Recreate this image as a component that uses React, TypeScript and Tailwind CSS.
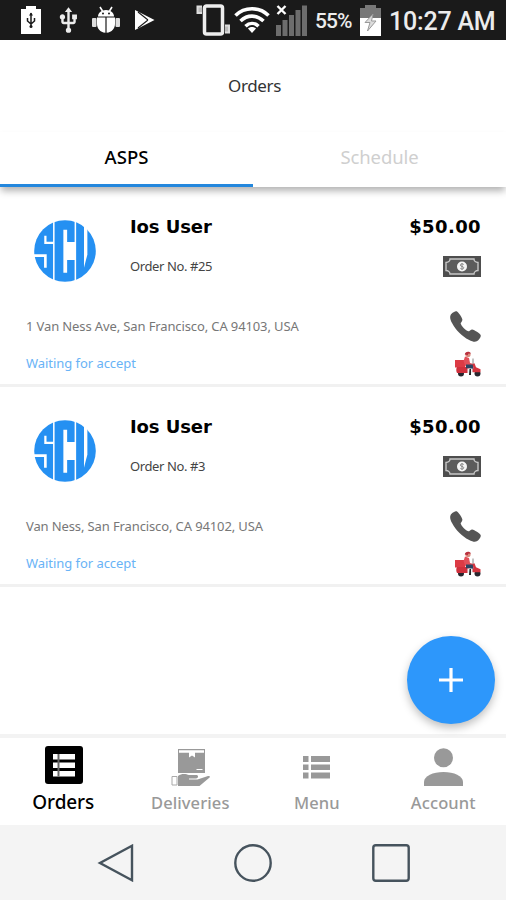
import React from 'react';
import { IoCall } from 'react-icons/io5';
import { MdUsb } from 'react-icons/md';

interface Order {
  id: number;
  customer: string;
  total: string;
  address: string;
  status: string;
}

const orders: Order[] = [
  { id: 25, customer: 'Ios User', total: '$50.00', address: '1 Van Ness Ave, San Francisco, CA 94103, USA', status: 'Waiting for accept' },
  { id: 3, customer: 'Ios User', total: '$50.00', address: 'Van Ness, San Francisco, CA 94102, USA', status: 'Waiting for accept' },
];

function StatusBar() {
  return (
    <div className="flex h-10 shrink-0 items-center bg-[#1a1a1a] pl-[21px] font-['Roboto',sans-serif] font-medium text-[#ececec]">
      <svg width="20" height="28" viewBox="0 0 20 28" fill="#fff">
        <path d="M5 0h10v3h5v25H0V3h5z" />
        <path d="M10 7v14M6.500 12v3l3.500 3 3.500-3v-3" stroke="#1a1a1a" strokeWidth="1.5" fill="none" />
        <path d="M8 9.500 10 6.500l2 3z" fill="#1a1a1a" />
        <circle cx="10" cy="20.500" r="1.500" fill="#1a1a1a" />
      </svg>
      <MdUsb className="ml-[13px] size-[29px]" />
      <svg className="ml-[9px]" width="28" height="28" viewBox="0 0 28 28" fill="#fff">
        <path d="M6 10.500c0-3.500 3-6.500 8-6.500s8 3 8 6.500z" />
        <path d="m8 1 2.500 4M20 1l-2.500 4" stroke="#fff" strokeWidth="1.600" />
        <path d="M5 11.500h8.400v15.300C8 26.500 5 22 5 18zM14.600 11.500H23V18c0 4-3 8.500-8.400 8.800z" />
        <rect x="0" y="12" width="4.500" height="9" rx="1" fill="#ddd" />
        <rect x="23.500" y="12" width="4.500" height="9" rx="1" fill="#ddd" />
        <circle cx="11" cy="7.500" r="1" fill="#1a1a1a" />
        <circle cx="17" cy="7.500" r="1" fill="#1a1a1a" />
      </svg>
      <svg className="ml-[14px]" width="22" height="22" viewBox="0 0 22 22">
        <path d="M1 1v20L20.500 11z" fill="#fff" />
        <path d="m4 3 10 8M4 19l10-8" stroke="#1a1a1a" strokeWidth="1.100" />
      </svg>
      <svg className="ml-[40px]" width="35" height="32" viewBox="0 0 35 32">
        <rect x="8.500" y="2" width="18" height="28" rx="2" fill="none" stroke="#eee" strokeWidth="3.500" />
        <path d="M6 2.500H1.500V9H6M29 21.500h4v7h-4" fill="#bbb" stroke="#ddd" strokeWidth="2" />
      </svg>
      <svg className="ml-[3px]" width="36" height="28" viewBox="0 0 36 28" fill="none" stroke="#fff" strokeWidth="3.600">
        <path d="M1.500 9.500c9-9 24-9 33 0" />
        <path d="M6.500 15c7-6.500 16-6.500 23 0" />
        <path d="M11.500 20.300c4-3.800 9-3.800 13 0" />
        <path d="m14 22.500 4 4.500 4-4.500c-2-2-6-2-8 0z" fill="#fff" stroke="none" />
      </svg>
      <svg className="ml-[6px]" width="31" height="32" viewBox="0 0 31 32">
        <path d="M0 21h5v11H0zM6.500 16h5v16h-5zM13 11h5v21h-5zM19.500 6h5v26h-5zM26 1.500h5V32h-5z" fill="#6d6d6d" />
        <path d="m1.500 2 8 8M9.500 2l-8 8" stroke="#fff" strokeWidth="2.400" />
      </svg>
      <span className="mt-[3px] ml-[8px] w-[38px] text-[21px] tracking-[-0.9px] whitespace-nowrap">55%</span>
      <svg className="ml-[7px]" width="21" height="31" viewBox="0 0 21 31">
        <path d="M5 0h11v3h5v28H0V3h5z" fill="#777" />
        <path d="M0 13h21v18H0z" fill="#fff" />
        <path d="M13 9 5 17.500h5L7.500 26l8.500-10h-4.500z" fill="#ddd" stroke="#999" strokeWidth="1" />
      </svg>
      <span className="mt-[3px] ml-[8px] text-[25px] tracking-[-0.2px] whitespace-nowrap">10:27 AM</span>
    </div>
  );
}

function StoreLogo() {
  return (
    <svg width="62" height="62" viewBox="0 0 61 61">
      <circle cx="30.500" cy="30.500" r="30.300" fill="#2590f2" />
      <g fill="none" stroke="#fff">
        <path d="M19.500 0v61M40.700 0v61" strokeWidth="1.500" />
        <path d="M19.500 22.500h-8.300V15.500" strokeWidth="2.200" />
        <path d="M0 35h11.200V47" strokeWidth="2.600" />
      </g>
      <path d="M28.900 9.500h3.700v12.200h7.900v17.600h-7.900V52h-3.700z" fill="#fff" />
      <path d="M49.200 0h3.300v34l-3.300 13z" fill="#fff" />
    </svg>
  );
}

function CashIcon() {
  return (
    <svg width="38" height="21" viewBox="0 0 38 21">
      <rect width="38" height="21" fill="#4e4e4e" />
      <path d="M7 3h24c0 2 2 3.500 4 3.500v8c-2 0-4 1.500-4 3.500H7c0-2-2-3.500-4-3.500v-8c2 0 4-1.500 4-3.500z" fill="#5c5c5c" stroke="#c8c8c8" strokeWidth="1.400" />
      <circle cx="19" cy="10.500" r="5" fill="#f4f4f4" />
      <path d="M20.800 8.500c-1-1-3.500-.8-3.500.6 0 1.700 3.500 1 3.500 2.700 0 1.400-2.500 1.600-3.500.5M19 7v7" fill="none" stroke="#777" strokeWidth=".8" />
    </svg>
  );
}

function ScooterIcon() {
  return (
    <svg width="27" height="26" viewBox="0 0 27 26">
      <circle cx="7" cy="22.500" r="3" fill="#26262e" />
      <circle cx="23.500" cy="22.500" r="3" fill="#26262e" />
      <path d="M1 9h10v7.500H1z" fill="#dc3b45" />
      <path d="M3 16h10l3 1.500V22H3c-1-2-1-4.500 0-6z" fill="#cf303c" />
      <path d="M11 5.500 15 7l1 5 3.500 1-1 2.500h-7L9.500 10z" fill="#e2505a" />
      <path d="M12 13.500h7l1 7.500h-3l-1.500-4-3.500.5z" fill="#2c4563" />
      <path d="M19 7.500V13" stroke="#888" />
      <path d="m18.500 13 2-.7 1.500 4 4.500 2v3h-8L17 18.500l2.500-1z" fill="#d5343f" />
      <circle cx="14" cy="3.500" r="2.600" fill="#d88b7d" />
      <path d="M10.800 3.500C11 0 16 0 17 2.500l-3 .3v1.500z" fill="#b9303e" />
      <path d="M13.500 17.500h5V22h-5z" fill="#eef2f5" />
      <path d="M15.500 18H17v6h-2z" fill="#222" />
    </svg>
  );
}

function OrderCard({ order }: { order: Order }) {
  return (
    <div className="flex h-[200px] flex-col border-b-3 border-[#f1f1f1] pr-[25px] pl-[26px]">
      <div className="flex h-[114px] pt-[33px]">
        <div className="ml-[8px] w-[96px]">
          <StoreLogo />
        </div>
        <div className="flex flex-1 flex-col">
          <h2 className="-mt-[5px] font-['DejaVu_Sans',sans-serif] text-[18px] leading-6 font-bold tracking-[-0.1px] whitespace-nowrap text-black">{order.customer}</h2>
          <p className="mt-[17px] text-[13px] leading-5 tracking-[-0.4px] whitespace-nowrap text-[#444]">Order No. #{order.id}</p>
        </div>
        <div className="flex flex-col items-end">
          <div className="-mt-[5px] font-['DejaVu_Sans',sans-serif] text-[18px] leading-6 font-bold tracking-[0.4px] text-black">{order.total}</div>
          <div className="mt-[17px]">
            <CashIcon />
          </div>
        </div>
      </div>
      <div className="flex h-[50px] items-center justify-between">
        <p className="mt-[2px] text-[13px] tracking-[-0.12px] whitespace-nowrap text-[#777]">{order.address}</p>
        <IoCall className="-mr-[2px] size-[35px] text-[#555]" />
      </div>
      <div className="flex h-[26px] items-center justify-between">
        <p className="text-[13px] tracking-[-0.05px] whitespace-nowrap text-[#69b3f6]">{order.status}</p>
        <ScooterIcon />
      </div>
    </div>
  );
}

function OrdersIcon() {
  return (
    <svg width="38" height="38" viewBox="0 0 38 38">
      <rect width="38" height="38" rx="3" fill="#000" />
      <path d="M8 8h22v5.500H8zM8 16.500h22V22H8zM8 25h22v5.500H8z" fill="#fff" />
      <path d="M13.500 8v22.500" stroke="#666" strokeWidth="2" />
    </svg>
  );
}

function DeliveriesIcon() {
  return (
    <svg width="39" height="38" viewBox="0 0 39 38" fill="#999">
      <path d="M7 1h27v24H7z" />
      <path d="M8 2.300h25v2.400H8zM18 4h6v5.500l-3-2-3 2zM25.500 21h6v1h-6z" fill="#fff" />
      <path d="M1 28.500h5v8.500H1z" fill="#fff" stroke="#aaa" />
      <path d="M7 28c4-3 8-2 11-1h8c2 1 1 3-1 3.500h-7v1h8.500L37 28c2-.5 2.500 1 1 2l-9.500 8H7z" />
    </svg>
  );
}

function MenuIcon() {
  return (
    <svg width="27" height="38" viewBox="0 0 27 38" fill="#999">
      <path d="M0 8h5.500v6H0zM8 8h19v6H8zM0 16.500h5.500V22H0zM8 16.500h19V22H8zM0 24.500h5.500v6H0zM8 24.500h19v6H8z" />
    </svg>
  );
}

function AccountIcon() {
  return (
    <svg width="39" height="38" viewBox="0 0 39 38" fill="#999">
      <circle cx="19.500" cy="9.800" r="9.500" />
      <path d="M0 38v-4c0-6 9-10 19.500-10S39 28 39 34v4z" />
    </svg>
  );
}

const tabs = [
  { label: 'Orders', icon: <OrdersIcon />, active: true },
  { label: 'Deliveries', icon: <DeliveriesIcon />, active: false },
  { label: 'Menu', icon: <MenuIcon />, active: false },
  { label: 'Account', icon: <AccountIcon />, active: false },
];

function BottomTabs() {
  return (
    <nav className="grid h-[91px] shrink-0 grid-cols-4 border-t-4 border-[#f3f3f3] bg-white">
      {tabs.map((tab) => (
        <div key={tab.label} className="flex flex-col items-center">
          {tab.active ? (
            <>
              <div className="mt-[8px] ml-px">{tab.icon}</div>
              <span className="mt-[6px] text-[19px] leading-6 font-medium tracking-[-0.1px] text-black">{tab.label}</span>
            </>
          ) : (
            <>
              <div className="mt-[10px] ml-px">{tab.icon}</div>
              <span className="mt-[5px] ml-px text-[16.5px] leading-6 font-medium tracking-[0.1px] text-[#999]">{tab.label}</span>
            </>
          )}
        </div>
      ))}
    </nav>
  );
}

function SystemNav() {
  return (
    <div className="flex h-[75px] shrink-0 items-center justify-center gap-[100px] bg-[#f4f4f4]">
      <svg width="38" height="38" viewBox="0 0 38 38" fill="none" stroke="#46535d" strokeWidth="2.400">
        <path d="M36 1.800v34.400L4 19z" />
      </svg>
      <svg width="38" height="38" viewBox="0 0 38 38" fill="none" stroke="#46535d" strokeWidth="2.400">
        <circle cx="19" cy="19" r="17.700" />
      </svg>
      <svg width="38" height="38" viewBox="0 0 38 38" fill="none" stroke="#46535d" strokeWidth="2.400">
        <rect x="1.300" y="1.300" width="35.400" height="35.400" rx="2.500" />
      </svg>
    </div>
  );
}

export default function App() {
  return (
    <div className="relative flex h-[900px] w-[506px] flex-col overflow-hidden bg-white font-['Noto_Sans',sans-serif]">
      <StatusBar />
      <header className="flex h-[92px] shrink-0 items-center justify-center pl-[3px] text-[17px] tracking-[-0.4px] text-[#333]">Orders</header>
      <div className="relative z-10 flex h-[55px] shrink-0 bg-white shadow-[0_5px_7px_-1px_rgba(0,0,0,0.3)]">
        <div className="flex flex-1 items-center justify-center border-b-3 border-[#2387dd] pb-[2px] text-[18.5px] font-medium text-black">ASPS</div>
        <div className="flex flex-1 items-center justify-center border-b-3 border-transparent pb-[2px] text-[18.5px] tracking-[-0.1px] text-[#cfcfcf]">Schedule</div>
      </div>
      <main className="min-h-0 flex-1 overflow-hidden">
        {orders.map((order) => (
          <OrderCard key={order.id} order={order} />
        ))}
      </main>
      <BottomTabs />
      <SystemNav />
      <button aria-label="Add order" className="absolute top-[636px] left-[407px] flex size-[88px] items-center justify-center rounded-full bg-[#2d97fb] shadow-[0_4px_8px_rgba(0,0,0,0.25)]">
        <svg width="24" height="24" viewBox="0 0 24 24" stroke="#fff" strokeWidth="3.200">
          <path d="M12 0v24M0 12h24" />
        </svg>
      </button>
    </div>
  );
}
